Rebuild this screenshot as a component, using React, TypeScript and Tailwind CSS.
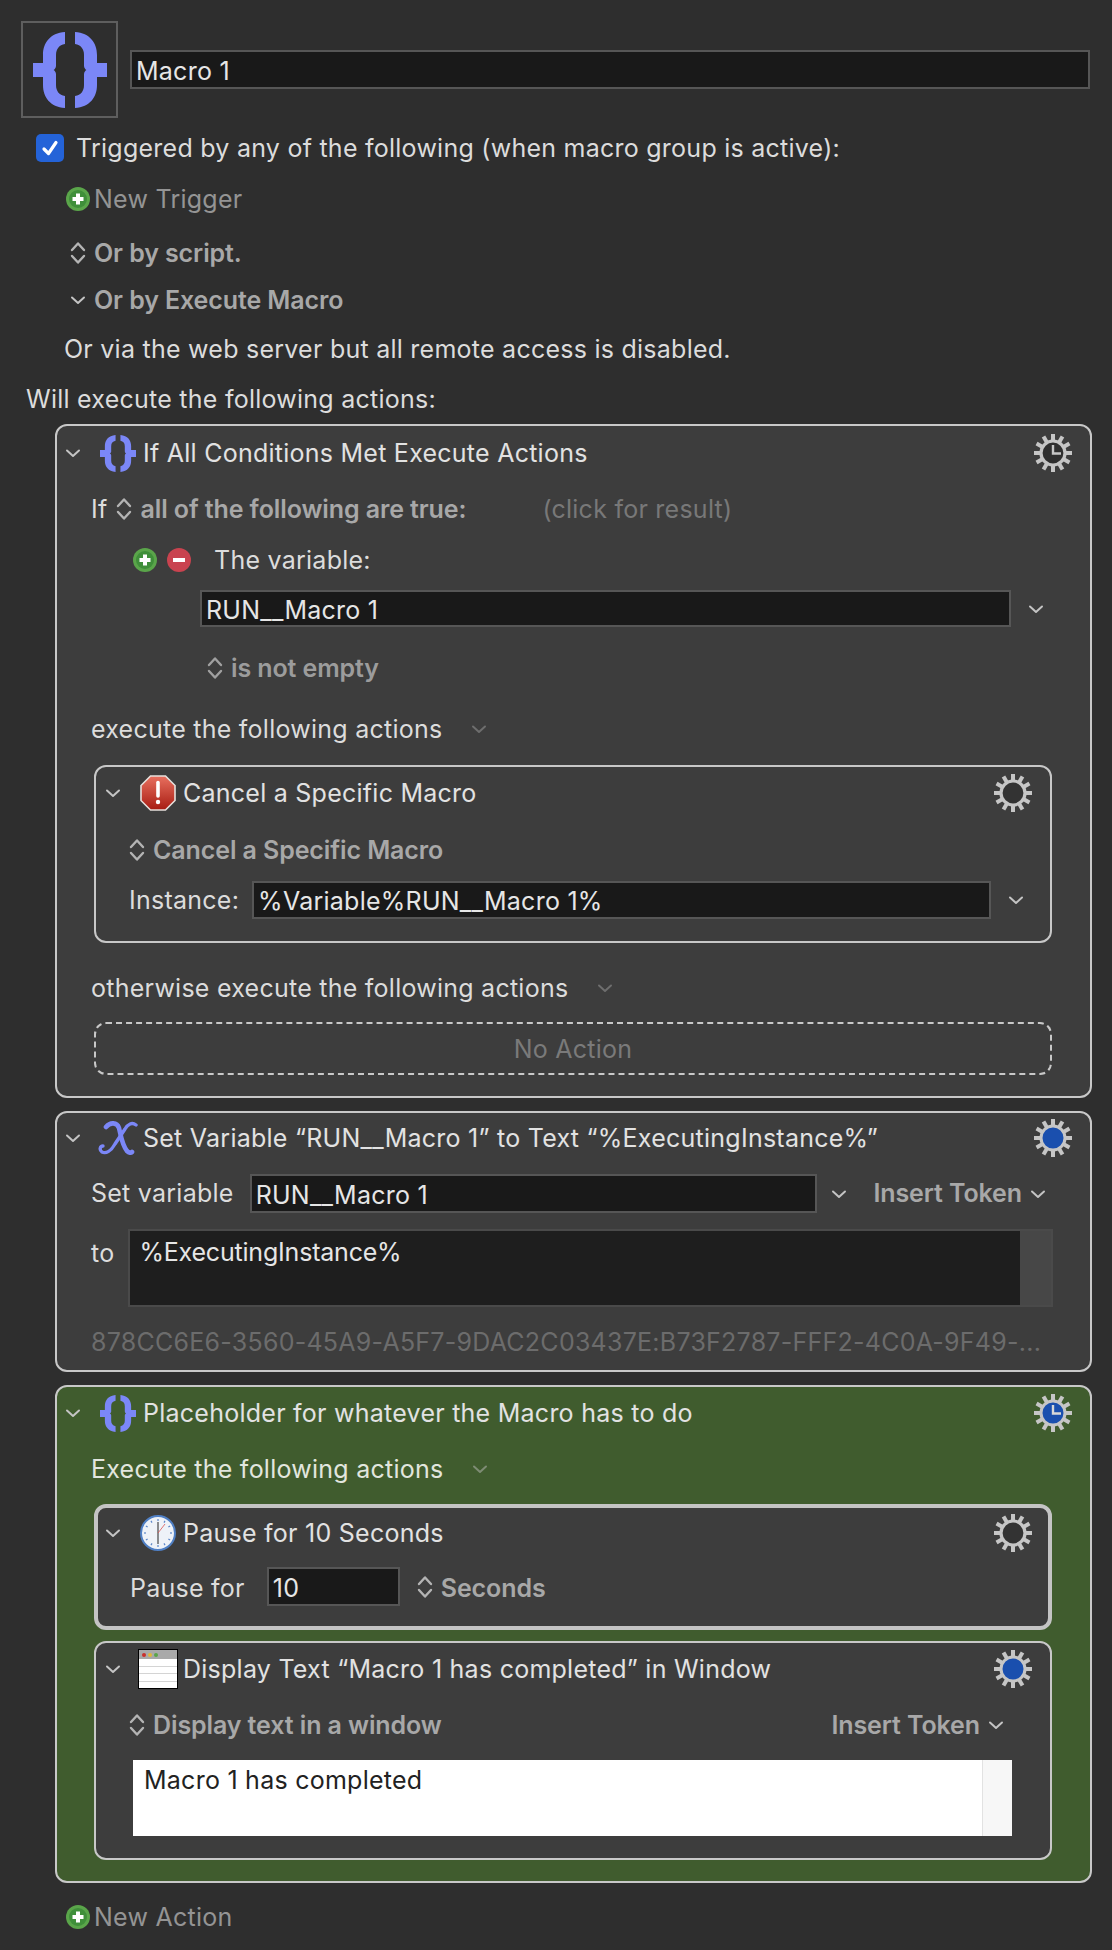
import React from 'react'

// ── Small drawings ───────────────────────────
const BRACE =
  'M32 0C17 1 10 11 10 23V31H0V45H10V53C10 65 17 75 32 76V64C26 63 23 59 23 53V42C23 40 21 38 20.5 38C21 38 23 36 23 34V23C23 17 26 13 32 12Z'

function Braces({ className }: { className: string }) {
  return (
    <svg viewBox="0 0 74 76" className={className} fill="#7b87f7">
      <path d={BRACE} />
      <path d={BRACE} transform="matrix(-1 0 0 1 74 0)" />
    </svg>
  )
}

function Chevron({ className = 'w-4 h-4', color = '#c4c4c4' }: { className?: string; color?: string }) {
  return (
    <svg viewBox="0 0 16 16" className={className} fill="none" stroke={color} strokeWidth="2" strokeLinecap="round" strokeLinejoin="round">
      <path d="M2 5.5L8 11L14 5.5" />
    </svg>
  )
}

function UpDown({ color = '#b4b4b4' }: { color?: string }) {
  return (
    <svg viewBox="0 0 16 24" className="w-4 h-6 shrink-0" fill="none" stroke={color} strokeWidth="2.4" strokeLinecap="round" strokeLinejoin="round">
      <path d="M2 9L8 2.5L14 9" />
      <path d="M2 15L8 21.5L14 15" />
    </svg>
  )
}

function Gear({ mode }: { mode: 'plain' | 'blue' | 'clock' }) {
  const teeth = Array.from({ length: 12 }, (_, i) => i * 30)
  return (
    <svg viewBox="0 0 38 38" className="w-[38px] h-[38px] shrink-0 ml-auto">
      {teeth.map((a) => (
        <rect key={a} x="17" y="0" width="4" height="9" fill="#c6c6c6" transform={`rotate(${a} 19 19)`} />
      ))}
      <circle cx="19" cy="19" r="12" fill={mode === 'blue' ? '#1a4fae' : mode === 'clock' ? '#2f2f2f' : '#333'} stroke="#c6c6c6" strokeWidth={mode === 'blue' ? 3 : 3.2} />
      {mode === 'clock' && <path d="M19 11V19.5H27" fill="none" stroke="#c6c6c6" strokeWidth="2.4" />}
    </svg>
  )
}

function GearBlueClock() {
  const teeth = Array.from({ length: 12 }, (_, i) => i * 30)
  return (
    <svg viewBox="0 0 38 38" className="w-[38px] h-[38px] shrink-0 ml-auto">
      {teeth.map((a) => (
        <rect key={a} x="17" y="0" width="4" height="9" fill="#c6c6c6" transform={`rotate(${a} 19 19)`} />
      ))}
      <circle cx="19" cy="19" r="12" fill="#1a4fae" stroke="#c6c6c6" strokeWidth="3" />
      <path d="M19 11V19.5H27" fill="none" stroke="#d8d8d8" strokeWidth="2.4" />
    </svg>
  )
}

function PlusDot() {
  return (
    <svg viewBox="0 0 24 24" className="w-6 h-6 shrink-0">
      <circle cx="12" cy="12" r="12" fill="#5aa54a" />
      <circle cx="12" cy="12" r="9" fill="#3f8f3a" />
      <path d="M12 6.5V17.5M6.5 12H17.5" stroke="#fff" strokeWidth="4" />
    </svg>
  )
}

function MinusDot() {
  return (
    <svg viewBox="0 0 24 24" className="w-6 h-6 shrink-0">
      <circle cx="12" cy="12" r="12" fill="#c9434f" />
      <path d="M6 12H18" stroke="#fff" strokeWidth="4" />
    </svg>
  )
}

function StopSign() {
  return (
    <svg viewBox="0 0 36 36" className="w-9 h-9">
      <defs>
        <linearGradient id="stop" x1="0" y1="0" x2="0" y2="1">
          <stop offset="0" stopColor="#e8705f" />
          <stop offset="1" stopColor="#a81c12" />
        </linearGradient>
      </defs>
      <path d="M10.5 1H25.5L35 10.5V25.5L25.5 35H10.5L1 25.5V10.5Z" fill="url(#stop)" stroke="#e6e0dc" strokeWidth="1.6" />
      <path d="M18 7.5V21" stroke="#fff" strokeWidth="3.6" strokeLinecap="round" />
      <circle cx="18" cy="27" r="2.2" fill="#fff" />
    </svg>
  )
}

function ScriptX() {
  return (
    <svg viewBox="0 0 40 34" className="w-10 h-[34px]" fill="none" stroke="#7b87f7" strokeLinecap="round">
      <path d="M8 6C12 1 19 1 21 7C23 15 24 24 29 30C31 32 33 32 34 31" strokeWidth="4.6" />
      <path d="M38 4C34 1 30 3 27 8L17 23C13 30 8 33 4 31C1 29 2 25 5 25" strokeWidth="3.4" />
    </svg>
  )
}

function ClockFace() {
  return (
    <svg viewBox="0 0 36 36" className="w-9 h-9">
      <circle cx="18" cy="18" r="17" fill="#eef2f8" stroke="#4f7fc4" strokeWidth="2" />
      {[0, 30, 60, 90, 120, 150, 180, 210, 240, 270, 300, 330].map((a) => (
        <rect key={a} x="17.4" y="4" width="1.2" height="2" fill="#5b86c8" transform={`rotate(${a} 18 18)`} />
      ))}
      <path d="M18 7V18M18 18V29" stroke="#222" strokeWidth="1" />
      <path d="M18 18L25 9" stroke="#d9534f" strokeWidth="0.8" />
    </svg>
  )
}

function WindowIcon() {
  return (
    <div className="w-10 h-10 border border-black bg-white flex flex-col">
      <div className="h-[9px] bg-[#a9a9a9] flex items-center gap-[2px] pl-[3px]">
        <span className="w-1 h-1 rounded-full bg-[#c9302c]" />
        <span className="w-1 h-1 rounded-full bg-[#e0b83a]" />
        <span className="w-1 h-1 rounded-full bg-[#5aa54a]" />
      </div>
      <div className="flex-1 flex flex-col justify-evenly">
        <div className="h-px bg-[#d4d4d4]" />
        <div className="h-px bg-[#d4d4d4]" />
        <div className="h-px bg-[#d4d4d4]" />
      </div>
    </div>
  )
}

// ── Row pieces ───────────────────────────────
function ActionHeader({ icon, title, gear, h, pad }: { icon: React.ReactNode; title: string; gear: React.ReactNode; h: string; pad: string }) {
  return (
    <div className={`flex items-center ${h} ${pad}`}>
      <Chevron />
      <div className="w-11 ml-[15px] mr-[3px] flex justify-center shrink-0">{icon}</div>
      <span className="text-[#e2e2e2]">{title}</span>
      {gear}
    </div>
  )
}

function Field({ children, className }: { children: React.ReactNode; className: string }) {
  return (
    <div className={`bg-[#191919] border-2 border-[#565656] flex items-center pl-[4px] pt-[3px] text-[#e6e6e6] ${className}`}>
      {children}
    </div>
  )
}

const BOLD = 'font-semibold tracking-[-0.1px] text-[#a8a8a8]'
const LABEL = 'text-[#dcdcdc]'

export default function App() {
  return (
    <div className="w-[1112px] h-[1950px] bg-[#2e2e2e] pt-[21px] font-['Inter',sans-serif] text-[25px] tracking-[0.25px] leading-none">
      {/* Name and icon */}
      <div className="flex items-center gap-3 pl-[21px] pr-[22px]">
        <div className="w-[97px] h-[97px] border-2 border-[#5e5e5e] flex items-center justify-center shrink-0">
          <Braces className="w-[74px] h-[76px]" />
        </div>
        <Field className="flex-1 h-[39px]">Macro 1</Field>
      </div>

      {/* Triggers */}
      <div className="flex items-center h-[60px] pl-9 gap-3">
        <div className="w-7 h-7 rounded-[5px] bg-[#2463d8] flex items-center justify-center">
          <svg viewBox="0 0 20 20" className="w-5 h-5" fill="none" stroke="#fff" strokeWidth="3.2" strokeLinecap="round" strokeLinejoin="round">
            <path d="M4 11L8.5 15.5L16 4.5" />
          </svg>
        </div>
        <span className={LABEL}>Triggered by any of the following (when macro group is active):</span>
      </div>
      <div className="flex items-center h-[42px] pl-[66px] gap-1">
        <PlusDot />
        <span className="text-[#949494]">New Trigger</span>
      </div>
      <div className="flex items-center h-[66px] pl-[70px] gap-2">
        <UpDown />
        <span className={BOLD}>Or by script.</span>
      </div>
      <div className="flex items-center h-7 pl-[70px] gap-2">
        <Chevron />
        <span className={BOLD}>Or by Execute Macro</span>
      </div>
      <div className={`flex items-center h-[70px] pl-16 ${LABEL}`}>Or via the web server but all remote access is disabled.</div>
      <div className={`flex items-center h-[30px] pl-[26px] ${LABEL}`}>Will execute the following actions:</div>

      <div className="ml-[55px] mr-5 mt-[10px]">
        {/* If all conditions */}
        <div className="border-2 border-[#c8c8c8] rounded-xl bg-[#3d3d3d] pb-[21px]">
          <ActionHeader h="h-[54px]" pad="pl-2 pr-[18px]" icon={<Braces className="w-9 h-[39px]" />} title="If All Conditions Met Execute Actions" gear={<Gear mode="clock" />} />
          <div className="flex items-center h-[58px] pl-[34px]">
            <span className={LABEL}>If</span>
            <span className="ml-[9px] mr-[8px]"><UpDown /></span>
            <span className={BOLD}>all of the following are true:</span>
            <span className="ml-[76px] text-[#787878]">(click for result)</span>
          </div>
          <div className="flex items-center h-11 pl-[76px]">
            <PlusDot />
            <span className="ml-[10px]"><MinusDot /></span>
            <span className={`ml-[23px] ${LABEL}`}>The variable:</span>
          </div>
          <div className="flex items-center mt-2 pl-[143px]">
            <Field className="w-[811px] h-[37px]">RUN__Macro 1</Field>
            <span className="ml-[17px]"><Chevron /></span>
          </div>
          <div className="flex items-center h-[82px] pl-[150px] gap-2">
            <UpDown color="#a0a0a0" />
            <span className="font-semibold tracking-[-0.1px] text-[#9c9c9c]">is not empty</span>
          </div>
          <div className={`flex items-center h-10 pl-[34px] ${LABEL}`}>
            execute the following actions
            <span className="ml-[29px]"><Chevron color="#6e6e6e" /></span>
          </div>

          {/* Cancel a macro */}
          <div className="ml-[37px] mr-[38px] mt-4 border-2 border-[#c8c8c8] rounded-xl h-[178px]">
            <ActionHeader h="h-[52px]" pad="pl-[9px] pr-[18px]" icon={<StopSign />} title="Cancel a Specific Macro" gear={<Gear mode="plain" />} />
            <div className="flex items-center h-[62px] pl-[33px] gap-2">
              <UpDown />
              <span className={BOLD}>Cancel a Specific Macro</span>
            </div>
            <div className="flex items-center pl-[33px]">
              <span className={LABEL}>Instance:</span>
              <Field className="ml-[13px] w-[739px] h-[38px]">%Variable%RUN__Macro 1%</Field>
              <span className="ml-[17px]"><Chevron /></span>
            </div>
          </div>

          <div className={`flex items-center h-10 mt-[25px] pl-[34px] ${LABEL}`}>
            otherwise execute the following actions
            <span className="ml-[29px]"><Chevron color="#6e6e6e" /></span>
          </div>
          <div className="ml-[37px] mr-[38px] mt-[14px] h-[53px] pt-[2px] border-2 border-dashed border-[#c8c8c8] rounded-xl flex items-center justify-center text-[#7a7a7a]">
            No Action
          </div>
        </div>

        {/* Set variable */}
        <div className="mt-[13px] border-2 border-[#c8c8c8] rounded-xl bg-[#3d3d3d] pb-[10px]">
          <ActionHeader h="h-[50px]" pad="pl-2 pr-[18px]" icon={<ScriptX />} title="Set Variable “RUN__Macro 1” to Text “%ExecutingInstance%”" gear={<Gear mode="blue" />} />
          <div className="flex items-center mt-[11px] pl-[34px] pr-[44px]">
            <span className={LABEL}>Set variable</span>
            <Field className="ml-4 w-[567px] h-[39px]">RUN__Macro 1</Field>
            <span className="ml-[14px]"><Chevron /></span>
            <span className={`ml-auto ${BOLD}`}>Insert Token</span>
            <span className="ml-[8px]"><Chevron /></span>
          </div>
          <div className="flex items-start mt-4 pl-[34px]">
            <span className={`mt-[12px] ${LABEL}`}>to</span>
            <div className="ml-[14px] w-[925px] h-[78px] flex border-2 border-[#4a4a4a]">
              <div className="flex-1 bg-[#1e1e1e] pl-[9px] pt-[9px] text-[#e6e6e6] tracking-[-0.2px]">%ExecutingInstance%</div>
              <div className="w-[31px] bg-[#474747]" />
            </div>
          </div>
          <div className={`mt-[17px] h-9 flex items-center pl-[34px] text-[#6c6c6c]`}>
            878CC6E6-3560-45A9-A5F7-9DAC2C03437E:B73F2787-FFF2-4C0A-9F49-...
          </div>
        </div>

        {/* Placeholder group */}
        <div className="mt-[13px] border-2 border-[#c8c8c8] rounded-xl bg-[#405c2e] pb-[21px]">
          <ActionHeader h="h-[52px]" pad="pl-2 pr-[18px]" icon={<Braces className="w-9 h-[39px]" />} title="Placeholder for whatever the Macro has to do" gear={<GearBlueClock />} />
          <div className="flex items-center h-[60px] pl-[34px] text-[#e2e6de]">
            Execute the following actions
            <span className="ml-[29px]"><Chevron color="#7e8c74" /></span>
          </div>

          <div className="ml-[37px] mr-[38px] mt-[5px] border-[4px] border-[#c4c4c4] rounded-xl bg-[#3d3d3d] h-[126px]">
            <ActionHeader h="h-[50px]" pad="pl-[7px] pr-[16px]" icon={<ClockFace />} title="Pause for 10 Seconds" gear={<Gear mode="plain" />} />
            <div className="flex items-center mt-[9px] pl-8">
              <span className={`pt-[3px] ${LABEL}`}>Pause for</span>
              <Field className="ml-[22px] w-[133px] h-[39px]">10</Field>
              <span className="ml-[17px] mr-2"><UpDown /></span>
              <span className={`pt-[3px] ${BOLD}`}>Seconds</span>
            </div>
          </div>

          <div className="ml-[37px] mr-[38px] mt-[11px] border-2 border-[#c8c8c8] rounded-xl bg-[#3d3d3d] h-[219px]">
            <ActionHeader h="h-[52px]" pad="pl-[9px] pr-[18px]" icon={<WindowIcon />} title="Display Text “Macro 1 has completed” in Window" gear={<Gear mode="blue" />} />
            <div className="flex items-center h-[60px] pl-[33px] pr-[46px]">
              <span className="mr-2"><UpDown /></span>
              <span className={BOLD}>Display text in a window</span>
              <span className={`ml-auto ${BOLD}`}>Insert Token</span>
              <span className="ml-[8px]"><Chevron /></span>
            </div>
            <div className="mt-[5px] ml-[37px] mr-[38px] h-[76px] bg-white flex">
              <div className="flex-1 pl-[11px] pt-[8px] text-[#222]">Macro 1 has completed</div>
              <div className="w-[30px] bg-[#f7f7f7] border-l border-[#e2e2e2]" />
            </div>
          </div>
        </div>
      </div>

      <div className="flex items-center h-[34px] mt-[17px] pl-[66px] gap-1">
        <PlusDot />
        <span className="text-[#949494]">New Action</span>
      </div>
    </div>
  )
}
